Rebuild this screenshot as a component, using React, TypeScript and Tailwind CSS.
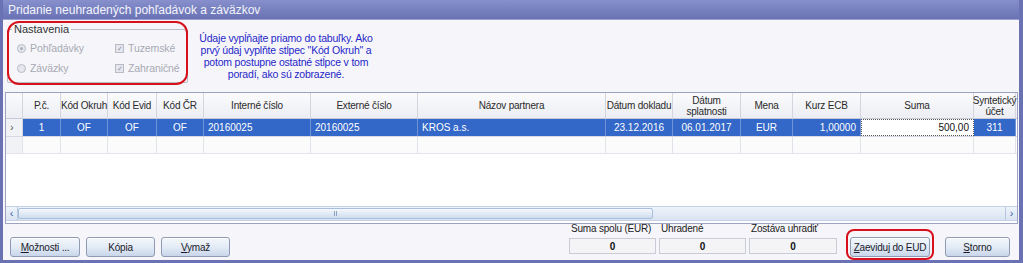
import React from 'react';

const cols = [
  { key: 'ind', label: '', w: 17 },
  { key: 'pc', label: 'P.č.', w: 38, align: 'center' },
  { key: 'okruh', label: 'Kód Okruh', w: 47, align: 'center' },
  { key: 'evid', label: 'Kód Evid', w: 49, align: 'center' },
  { key: 'cr', label: 'Kód ČR', w: 47, align: 'center' },
  { key: 'int', label: 'Interné číslo', w: 107, align: 'left' },
  { key: 'ext', label: 'Externé číslo', w: 107, align: 'left' },
  { key: 'nazov', label: 'Názov partnera', w: 188, align: 'left' },
  { key: 'dd', label: 'Dátum dokladu', w: 67, align: 'center' },
  { key: 'ds', label: 'Dátum\nsplatnosti', w: 68, align: 'center' },
  { key: 'mena', label: 'Mena', w: 52, align: 'center' },
  { key: 'kurz', label: 'Kurz ECB', w: 68, align: 'right' },
  { key: 'suma', label: 'Suma', w: 113, align: 'right' },
  { key: 'synt', label: 'Syntetický\núčet', w: 42, align: 'center' },
];

const row: Record<string, string> = {
  pc: '1',
  okruh: 'OF',
  evid: 'OF',
  cr: 'OF',
  int: '20160025',
  ext: '20160025',
  nazov: 'KROS a.s.',
  dd: '23.12.2016',
  ds: '06.01.2017',
  mena: 'EUR',
  kurz: '1,00000',
  suma: '500,00',
  synt: '311',
};

const alignCls = (a?: string) =>
  a === 'left' ? 'justify-start pl-1' : a === 'right' ? 'justify-end pr-1' : 'justify-center';

function Btn({ children, w }: { children: React.ReactNode; w: string }) {
  return (
    <div
      className={`${w} h-[20px] flex items-center justify-center whitespace-nowrap rounded-[3px] border border-[#8e9bb3] bg-gradient-to-b from-[#f3f7fc] via-[#e3ebf6] to-[#c9d6ea] text-[10px] tracking-[-0.2px] text-[#1b1b2a] shadow-[inset_0_1px_0_#ffffff]`}
    >
      {children}
    </div>
  );
}

function Field({ label, w }: { label: string; w: string }) {
  return (
    <div className={`${w} flex flex-col`}>
      <div className="text-[10px] leading-[12px] pl-[2px] whitespace-nowrap tracking-[-0.2px] text-[#222]">{label}</div>
      <div className="h-[16px] mt-[3px] border border-[#c9ccd6] bg-[#f4f4f6] flex items-center justify-center text-[10px] font-bold text-[#111]">
        0
      </div>
    </div>
  );
}

export default function App() {
  return (
    <div
      className="w-[1023px] h-[263px] bg-[#6a72b4] flex flex-col pl-[3px] pr-[4px] pb-[3px] overflow-hidden"
      style={{ fontFamily: '"Liberation Sans", Arial, sans-serif' }}
    >
      <div className="h-[19px] shrink-0 flex items-center pl-[5px] text-[12px] text-[#f4f4fb] bg-gradient-to-b from-[#8790cc] to-[#6a72b4]">
        Pridanie neuhradených pohľadávok a záväzkov
      </div>
      <div className="flex-1 min-h-0 bg-[#f6f6fa] flex flex-col relative border-t border-[#9aa1d2]">
        {/* top settings */}
        <div className="h-[72px] shrink-0 flex pl-[4px] pt-[9px]">
          <div className="w-[181px] h-[54px] shrink-0 border border-[#b9bdc8] rounded-[2px] relative">
            <div className="absolute -top-[7px] left-[4px] bg-[#f6f6fa] px-[2px] text-[11px] leading-[12px] text-[#333]">
              Nastavenia
            </div>
            <div className="grid grid-cols-[98px_75px] gap-y-[7px] pt-[12px] pl-[9px] text-[10.5px] leading-[13px] tracking-[-0.1px] text-[#a7a9b3] whitespace-nowrap">
              <div className="flex items-center gap-[4px]">
                <span className="w-[9px] h-[9px] rounded-full border border-[#b8bbc6] bg-[#e6e7ee] flex items-center justify-center">
                  <span className="w-[3px] h-[3px] rounded-full bg-[#a9acb9]" />
                </span>
                Pohľadávky
              </div>
              <div className="flex items-center gap-[4px]">
                <span className="w-[9px] h-[9px] border border-[#b8bbc6] bg-[#e6e7ee] text-[7px] leading-[7px] text-[#8d90a0] flex items-center justify-center">✓</span>
                Tuzemské
              </div>
              <div className="flex items-center gap-[4px]">
                <span className="w-[9px] h-[9px] rounded-full border border-[#b8bbc6] bg-[#e6e7ee]" />
                Záväzky
              </div>
              <div className="flex items-center gap-[4px]">
                <span className="w-[9px] h-[9px] border border-[#b8bbc6] bg-[#e6e7ee] text-[7px] leading-[7px] text-[#8d90a0] flex items-center justify-center">✓</span>
                Zahraničné
              </div>
            </div>
          </div>
          <div className="w-[176px] ml-[10px] pt-[3px] text-center text-[10.5px] leading-[12px] tracking-[-0.2px] whitespace-nowrap text-[#2626c8]">
            Údaje vypĺňajte priamo do tabuľky. Ako
            <br />
            prvý údaj vyplňte stĺpec "Kód Okruh" a
            <br />
            potom postupne ostatné stĺpce v tom
            <br />
            poradí, ako sú zobrazené.
          </div>
        </div>
        <div className="absolute left-[4px] top-[1px] w-[181px] h-[64px] rounded-[12px] border-2 border-[#d8101c]" />

        {/* grid */}
        <div className="ml-[2px] mr-[1px] h-[132px] shrink-0 border border-[#9ca3c0] bg-white flex flex-col">
          <div className="flex h-[26px] border-b border-[#c6cad6] bg-gradient-to-b from-[#fbfbfd] to-[#eceef3]">
            {cols.map((c) => (
              <div
                key={c.key}
                style={{ width: c.w }}
                className="shrink-0 h-full border-r border-[#d3d6de] flex items-center justify-center text-center whitespace-pre text-[10px] leading-[11px] tracking-[-0.2px] text-[#2a2a2a]"
              >
                {c.label}
              </div>
            ))}
          </div>
          <div className="flex h-[18px] border-b border-[#d6d9e2]">
            {cols.map((c) =>
              c.key === 'ind' ? (
                <div key={c.key} style={{ width: c.w }} className="shrink-0 border-r border-[#d3d6de] bg-[#f1f2f6] flex items-center pl-[4px] text-[11px] text-[#555]">
                  ›
                </div>
              ) : c.key === 'suma' ? (
                <div key={c.key} style={{ width: c.w }} className="shrink-0 bg-white border border-dotted border-[#555] flex items-center justify-end pr-[4px] text-[10px] text-[#111]">
                  {row[c.key]}
                </div>
              ) : (
                <div
                  key={c.key}
                  style={{ width: c.w }}
                  className={`shrink-0 border-r border-[#6f93d6] bg-[#3367c8] flex items-center ${alignCls(c.align)} text-[10px] text-white`}
                >
                  {row[c.key]}
                </div>
              )
            )}
          </div>
          <div className="flex h-[17px] border-b border-[#e3e5ec]">
            {cols.map((c) => (
              <div
                key={c.key}
                style={{ width: c.w }}
                className={`shrink-0 border-r border-[#e1e3ea] ${c.key === 'ind' ? 'bg-[#f1f2f6]' : 'bg-[#fbfbfc]'}`}
              />
            ))}
          </div>
          <div className="flex-1" />
          <div className="h-[15px] mb-[2px] flex items-center bg-gradient-to-b from-[#eef3fa] to-[#d9e4f2] border-y border-[#c4d1e4]">
            <div className="w-[12px] h-full flex items-center justify-center text-[11px] text-[#3a5ea8] border-r border-[#b9c8de]">‹</div>
            <div className="w-[635px] h-[11px] rounded-[2px] border border-[#a9bedc] bg-gradient-to-b from-[#f5f8fd] to-[#cfdcef] flex items-center justify-center">
              <span className="w-[3px] h-[5px] border-x border-[#8fa3c4]" />
            </div>
            <div className="flex-1" />
            <div className="w-[12px] h-full flex items-center justify-center text-[11px] text-[#3a5ea8] border-l border-[#b9c8de]">›</div>
          </div>
        </div>

        {/* bottom */}
        <div className="flex-1 min-h-0 flex items-end pb-[3px] pl-[7px]">
          <div className="flex gap-[6px]">
            <Btn w="w-[70px]">
              <span>
                <span className="underline">M</span>ožnosti ...
              </span>
            </Btn>
            <Btn w="w-[69px]">Kópia</Btn>
            <Btn w="w-[69px]">
              <span>
                <span className="underline">V</span>ymaž
              </span>
            </Btn>
          </div>
          <div className="ml-[339px] flex gap-[3px] mb-[3px]">
            <Field label="Suma spolu (EUR)" w="w-[87px]" />
            <Field label="Uhradené" w="w-[87px]" />
            <Field label="Zostáva uhradiť" w="w-[88px]" />
          </div>
          <div className="ml-[13px] relative">
            <Btn w="w-[80px]">
              <span>
                <span className="underline">Z</span>aeviduj do EUD
              </span>
            </Btn>
            <div className="absolute -left-[4px] -top-[8px] w-[88px] h-[31px] rounded-[8px] border-2 border-[#d8101c]" />
          </div>
          <div className="ml-[15px]">
            <Btn w="w-[65px]">
              <span>
                <span className="underline">S</span>torno
              </span>
            </Btn>
          </div>
        </div>
      </div>
    </div>
  );
}
